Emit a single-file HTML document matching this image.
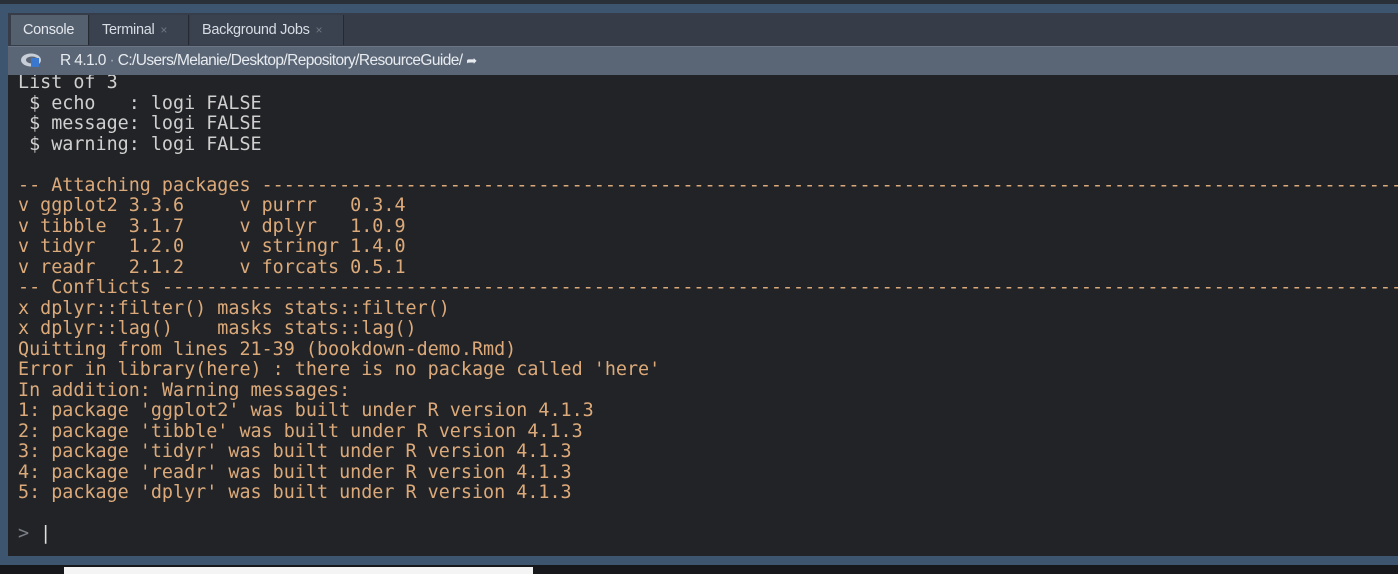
<!DOCTYPE html>
<html><head><style>
body{margin:0;width:1398px;height:574px;overflow:hidden;background:#1b1d21;position:relative;font-family:"Liberation Sans",sans-serif}
.a{position:absolute}
pre{margin:0;font-family:"DejaVu Sans Mono","Liberation Mono",monospace;font-size:18.4px;line-height:20.5px;color:#dcaa7a;white-space:pre}
.w{color:#d0d0d0}
.tab{position:absolute;top:15px;height:30px;font-size:14.5px;color:#d8dde4;line-height:30px;padding-left:12px;box-sizing:border-box;background:#3a4250;border-right:1px solid #262b33;letter-spacing:-0.3px}
.tab span{color:#6e7784;margin-left:6px;font-size:12px}
</style></head><body>
<div class="a" style="left:0;top:0;width:1398px;height:4px;background:#2a3038"></div>
<div class="a" style="left:0;top:4px;width:1398px;height:9px;background:#3e5570"></div>
<div class="a" style="left:0;top:13px;width:1398px;height:33px;background:#363d49"></div>
<div class="a" style="left:0;top:13px;width:8px;height:545px;background:#3e5570"></div>
<div class="tab" style="left:11px;width:78px;background:#55606f;color:#e4e8ee">Console</div>
<div class="tab" style="left:90px;width:99px">Terminal<span>×</span></div>
<div class="tab" style="left:190px;width:154px">Background Jobs<span>×</span></div>
<div class="a" style="left:8px;top:46px;width:1390px;height:29px;background:#5a6676;border-top:1px solid #6a7586"></div>
<div class="a" style="left:20px;top:52px;width:24px;height:16px">
<svg width="24" height="16"><ellipse cx="11" cy="8" rx="10" ry="6.5" fill="#c8ced8"/><ellipse cx="12" cy="8" rx="6" ry="3.5" fill="#5a6676"/><rect x="11" y="6" width="8" height="9" fill="#3a78d0"/></svg></div>
<div class="a" style="left:60px;top:52px;font-size:15.5px;color:#e8ecf0;letter-spacing:-0.6px;white-space:nowrap">R 4.1.0 <span style="color:#aab2bd">·</span> C:/Users/Melanie/Desktop/Repository/ResourceGuide/ <span style="font-size:13px">➦</span></div>
<div class="a" style="left:8px;top:75px;width:1390px;height:481px;background:#222326;overflow:hidden">
<pre class="a" style="left:10px;top:-2px"><span class="w">List of 3
 $ echo   : logi FALSE
 $ message: logi FALSE
 $ warning: logi FALSE</span>

-- Attaching packages ---------------------------------------------------------------------------------------------------------------
v ggplot2 3.3.6     v purrr   0.3.4
v tibble  3.1.7     v dplyr   1.0.9
v tidyr   1.2.0     v stringr 1.4.0
v readr   2.1.2     v forcats 0.5.1
-- Conflicts -----------------------------------------------------------------------------------------------------------------------
x dplyr::filter() masks stats::filter()
x dplyr::lag()    masks stats::lag()
Quitting from lines 21-39 (bookdown-demo.Rmd)
Error in library(here) : there is no package called 'here'
In addition: Warning messages:
1: package 'ggplot2' was built under R version 4.1.3
2: package 'tibble' was built under R version 4.1.3
3: package 'tidyr' was built under R version 4.1.3
4: package 'readr' was built under R version 4.1.3
5: package 'dplyr' was built under R version 4.1.3

<span style="color:#7a7f88">&gt;</span> <span style="color:#e0e0e0">|</span></pre>
</div>
<div class="a" style="left:0;top:556px;width:1398px;height:9px;background:#3e5570"></div>
<div class="a" style="left:0;top:565px;width:1398px;height:9px;background:#16181b"></div>
<div class="a" style="left:64px;top:567px;width:469px;height:7px;background:#f4f4f4"></div>
</body></html>
